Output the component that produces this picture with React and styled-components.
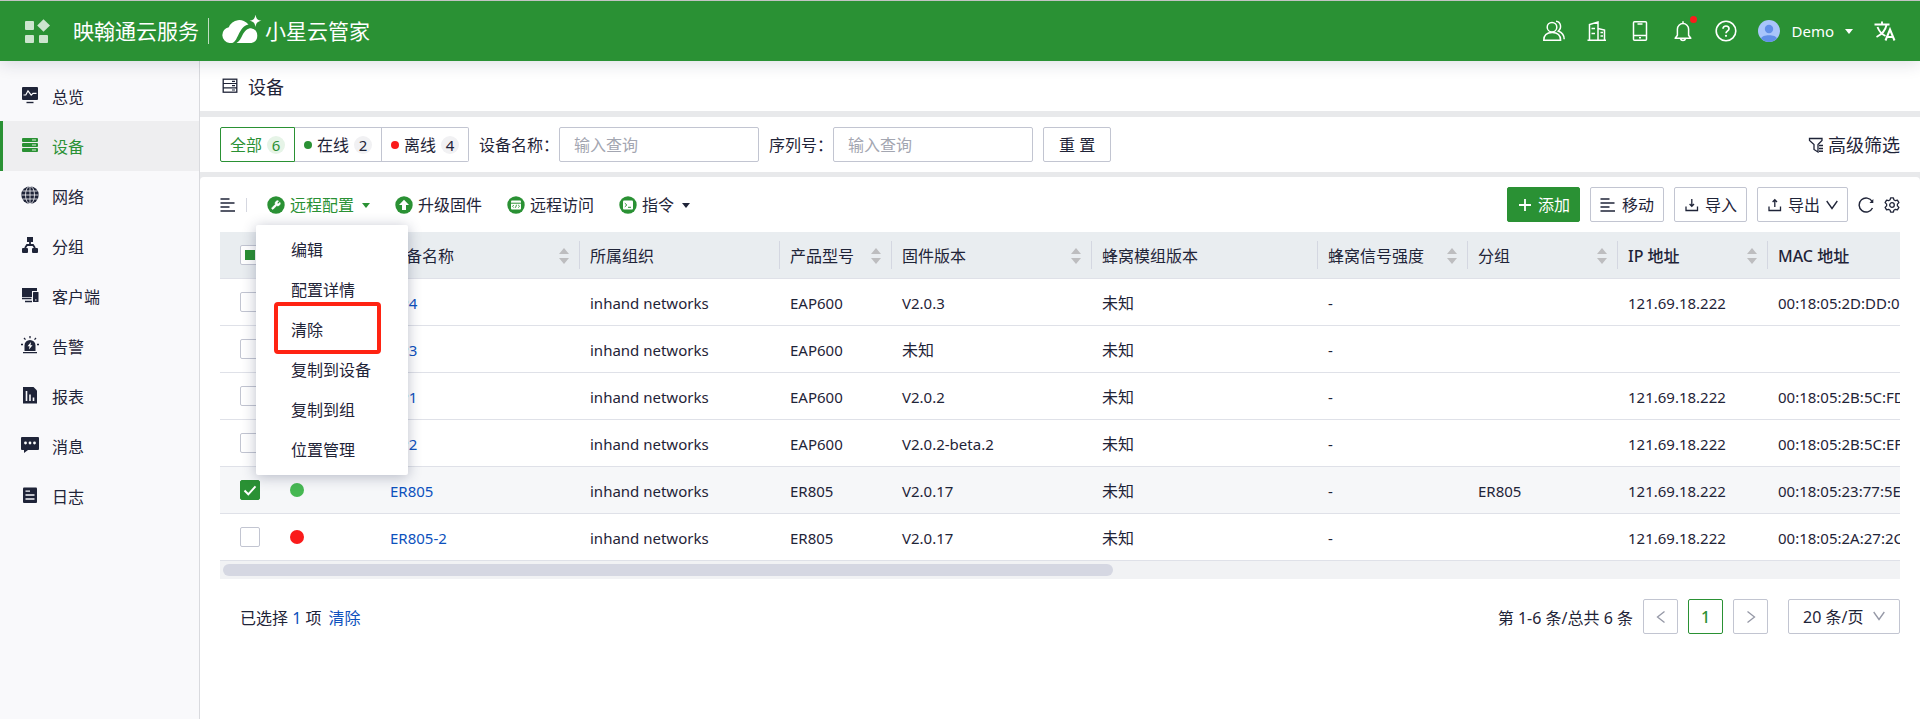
import React from "react";
import styled, { createGlobalStyle, css } from "styled-components";
import { Wrench } from "lucide-react";

const GlobalStyle = createGlobalStyle`
  * {
    box-sizing: border-box;
  }

  body {
    margin: 0;
    background: #ffffff;
    color: #1f2438;
    font-family: "Noto Sans", "Noto Sans CJK SC", sans-serif;
    font-size: 16px;
    line-height: 24px;
  }

  button, input, select {
    font: inherit;
    color: inherit;
  }

  a {
    text-decoration: none;
    color: inherit;
  }

  svg {
    display: block;
    flex: none;
  }
`;

const Page = styled.div`
  display: flex;
  flex-direction: column;
  min-height: 100vh;
`;

const Header = styled.header`
  position: relative;
  z-index: 1;
  display: flex;
  align-items: center;
  height: 61px;
  padding: 0 24px;
  border-top: 1px solid #c3c3c3;
  background: #2a9134;
  color: #ffffff;
  box-shadow: 0 2px 16px rgba(30, 36, 70, 0.16);
`;

const Brand = styled.div`
  display: flex;
  align-items: center;
  margin-left: 23px;
  font-size: 21px;
  font-weight: 400;
  white-space: nowrap;
`;

const BrandLine = styled.span`
  width: 1px;
  height: 26px;
  margin: 0 12px 0 9px;
  background: rgba(255, 255, 255, 0.7);
`;

const HeaderTools = styled.div`
  display: flex;
  align-items: center;
  gap: 21px;
  margin-left: auto;
`;

const IconButton = styled.button`
  display: flex;
  position: relative;
  align-items: center;
  padding: 0;
  border: 0;
  background: none;
  cursor: pointer;
`;

const HeaderButton = styled(IconButton)`
  justify-content: center;
  min-width: 22px;
  gap: 11px;
  font-size: 15px;
`;

const AlertDot = styled.span`
  position: absolute;
  top: -4px;
  right: -3px;
  width: 7px;
  height: 7px;
  border-radius: 50%;
  background: #fa1b1b;
`;

const Caret = styled.span`
  width: 0;
  height: 0;
  border: 4px solid transparent;
  border-top: 5px solid currentColor;
  border-bottom: 0;
`;

const Body = styled.div`
  display: flex;
  flex: 1;
`;

const Sidebar = styled.nav`
  flex: none;
  width: 200px;
  padding-top: 10px;
  border-right: 1px solid #d9dade;
  background: #f9f9fb;
`;

const NavItem = styled.a`
  display: flex;
  align-items: center;
  gap: 13px;
  height: 50px;
  padding: 2px 19px 0 18px;
  border-left: 3px solid transparent;

  svg {
    margin-bottom: 4px;
  }

  ${props =>
    props.$active &&
    css`
      border-left-color: #2a9134;
      background: #eeeef0;
      color: #2a9134;
    `}
`;

const Main = styled.main`
  flex: 1;
  min-width: 0;
  background: #e8e9eb;
`;

const Panel = styled.section`
  padding: 10px 20px;
  background: #ffffff;
`;

const TitlePanel = styled(Panel)`
  display: flex;
  align-items: center;
  gap: 10px;
  height: 50px;
  margin-bottom: 6px;
  padding-left: 22px;
`;

const Title = styled.h1`
  margin: 0;
  padding-top: 2px;
  font-size: 18px;
  font-weight: 400;
`;

const FilterPanel = styled(Panel)`
  display: flex;
  align-items: center;
  gap: 10px;
  margin-bottom: 5px;
`;

const TabGroup = styled.div`
  display: flex;
`;

const Tab = styled.button`
  display: flex;
  align-items: center;
  gap: 5px;
  height: 35px;
  padding: 0 9px;
  border: 1px solid ${props => (props.$active ? "#2a9134" : "#c2c5d1")};
  border-left-width: ${props => (props.$joined ? "0" : "1px")};
  border-radius: ${props => props.$radius || "0"};
  background: #ffffff;
  color: ${props => (props.$active ? "#2a9134" : "inherit")};
  cursor: pointer;
`;

const TabDot = styled.span`
  width: 8px;
  height: 8px;
  border-radius: 50%;
  background: ${props => props.$color};
`;

const Count = styled.span`
  width: 18px;
  height: 18px;
  border-radius: 9px;
  background: ${props => (props.$active ? "#e6f4e7" : "#f1f1f3")};
  font-size: 15px;
  line-height: 18px;
  text-align: center;
`;

const Field = styled.label`
  display: flex;
  align-items: center;
`;

const TextInput = styled.input`
  width: 200px;
  height: 35px;
  padding: 0 14px;
  border: 1px solid #c2c5d1;
  border-radius: 2px;
  background: #ffffff;

  &::placeholder {
    color: #a3a6b1;
  }
`;

const Button = styled.button`
  display: flex;
  align-items: center;
  gap: 6px;
  height: 35px;
  padding: 0 ${props => (props.$wide ? "15px" : "9px")};
  border: 1px solid ${props => (props.$primary ? "#2a9134" : "#c2c5d1")};
  border-radius: 2px;
  background: ${props => (props.$primary ? "#2a9134" : "#ffffff")};
  color: ${props => (props.$primary ? "#ffffff" : "inherit")};
  cursor: pointer;
`;

const AdvancedFilter = styled(IconButton)`
  gap: 4px;
  margin-left: auto;
  font-size: 18px;
`;

const ListPanel = styled(Panel)`
  min-height: calc(100% - 116px);
  border-radius: 4px 4px 0 0;
`;

const Toolbar = styled.div`
  display: flex;
  align-items: center;
  height: 35px;
  margin-bottom: 10px;
`;

const ToolbarLine = styled.span`
  width: 1px;
  height: 14px;
  margin: 0 20px 0 10px;
  background: #d5d7e0;
`;

const ActionGroup = styled.div`
  display: flex;
  gap: 25px;
`;

const Action = styled(IconButton)`
  gap: 5px;
  color: ${props => (props.$active ? "#2a9134" : "inherit")};

  ${Caret} {
    margin: 2px 0 0 3px;
  }
`;

const ToolbarEnd = styled.div`
  display: flex;
  align-items: center;
  gap: 10px;
  margin-left: auto;
`;

const Dropdown = styled.div`
  position: relative;
`;

const Menu = styled.ul`
  position: absolute;
  top: 32px;
  left: -11px;
  z-index: 2;
  width: 152px;
  margin: 0;
  padding: 5px 0;
  border-radius: 2px;
  background: #ffffff;
  box-shadow: 0 2px 14px rgba(34, 42, 80, 0.3);
  list-style: none;
`;

const MenuItem = styled.li`
  position: relative;
  height: 40px;
`;

const MenuButton = styled.button`
  width: 100%;
  height: 40px;
  padding: 0 35px;
  border: 0;
  background: none;
  text-align: left;
  white-space: nowrap;
  cursor: pointer;
`;

const Highlight = styled.span`
  position: absolute;
  top: -8px;
  left: 18px;
  width: 107px;
  height: 52px;
  border: 4px solid #ff2312;
  border-radius: 4px;
  pointer-events: none;
`;

const TableScroll = styled.div`
  overflow: hidden;
`;

const Table = styled.table`
  width: 3160px;
  table-layout: fixed;
  border-collapse: separate;
  border-spacing: 0;
`;

const Col = styled.col`
  width: ${props => props.$width}px;
`;

const Th = styled.th`
  height: 47px;
  padding: 0;
  border-bottom: 1px solid #dfe1e8;
  background: #e9edf0;
  font-weight: ${props => (props.$latin ? "500" : "400")};
  text-align: left;
`;

const ThInner = styled.div`
  display: flex;
  align-items: center;
  justify-content: space-between;
  height: 28px;
  padding: 2px 10px 0;
  border-right: ${props => (props.$line ? "1px solid #d4d7e1" : "0")};
`;

const Tr = styled.tr`
  background: ${props => (props.$selected ? "#f6f7f9" : "#ffffff")};
`;

const Td = styled.td`
  height: 47px;
  padding: 2px 10px 0;
  border-bottom: 1px solid #dfe1e8;
  font-size: ${props => (props.$latin ? "15px" : "16px")};
  white-space: nowrap;
`;

const CheckCell = styled(Td)`
  padding: 0 0 0 20px;
`;

const StatusCell = styled(Td)`
  padding: 0 10px;
`;

const StatusDot = styled.div`
  width: 14px;
  height: 14px;
  border-radius: 50%;
  background: ${props => props.$color};
`;

const CheckWrap = styled.div`
  position: relative;
  width: 20px;
  height: 20px;

  svg {
    position: absolute;
    top: 0;
    left: 0;
    pointer-events: none;
  }
`;

const HeadCheck = styled(CheckWrap)`
  margin-left: 20px;
`;

const Checkbox = styled.input`
  display: block;
  width: 20px;
  height: 20px;
  margin: 0;
  border: 1px solid #c2c5d1;
  border-radius: 2px;
  background: #ffffff;
  appearance: none;

  &:checked {
    border-color: #2a9134;
    background: #2a9134;
  }
`;

const DeviceLink = styled.a`
  color: #0d51bd;
`;

const ScrollTrack = styled.div`
  padding: 3px;
  background: #f1f2f4;
`;

const ScrollThumb = styled.div`
  width: calc(100% * 168 / 316);
  height: 12px;
  border-radius: 6px;
  background: #d5d7e2;
`;

const Footer = styled.footer`
  display: flex;
  align-items: center;
  justify-content: space-between;
  padding: 20px 0 20px 20px;
`;

const Selection = styled.div`
  padding-top: 3px;
`;

const SelectedCount = styled.span`
  color: #0d51bd;
`;

const ClearButton = styled(IconButton)`
  display: inline-block;
  margin-left: 7px;
  color: #0d51bd;
`;

const Pagination = styled.div`
  display: flex;
  align-items: center;
  gap: 10px;
`;

const Total = styled.span`
  padding-top: 3px;
`;

const PageButton = styled.button`
  display: flex;
  align-items: center;
  justify-content: center;
  width: 35px;
  height: 35px;
  padding: 0;
  border: 1px solid ${props => (props.$active ? "#2a9134" : "#c2c5d1")};
  border-radius: 2px;
  background: #ffffff;
  color: ${props => (props.$active ? "#2a9134" : "#9598a6")};
  font-weight: ${props => (props.$active ? "500" : "400")};
`;

const SelectWrap = styled.div`
  position: relative;
  margin-left: 10px;

  svg {
    position: absolute;
    top: 12px;
    right: 15px;
    color: #9598a6;
    pointer-events: none;
  }
`;

const PageSize = styled.select`
  width: 112px;
  height: 35px;
  padding: 0 14px;
  border: 1px solid #c2c5d1;
  border-radius: 2px;
  background: #ffffff;
  appearance: none;
`;

const Icon = ({ size = 18, w, h, box = "0 0 18 18", children }) => (
  <svg
    width={w || size}
    height={h || size}
    viewBox={box}
    fill="none"
    stroke="currentColor"
    aria-hidden="true"
  >
    {children}
  </svg>
);

const AppsIcon = () => (
  <svg width="26" height="24" viewBox="0 0 26 24" fill="#ffffff" fillOpacity="0.76">
    <rect x="1" y="2" width="9" height="9" rx="1" />
    <rect x="1" y="16" width="9" height="8" rx="1" />
    <rect x="15" y="16" width="9" height="8" rx="1" />
    <path d="M19.500 .3 26 6.500 19.500 12.700 13.200 6.500z" />
  </svg>
);

const CloudIcon = () => (
  <svg width="44" height="32" viewBox="0 0 44 32" fill="#ffffff">
    <path d="M11 28H8.500A8 8 0 0 1 7.800 12.200 11.500 11.500 0 0 1 27.500 9.500C22.500 10.500 20 14.500 17.300 20 15.300 24 14 27.500 11 28z" />
    <path d="M15.500 28C18.500 26.500 19.800 23.500 21.500 20 23.700 16 26.500 13.300 30 13.300A7.500 7.500 0 0 1 30.500 28z" />
    <path d="M34.500 -.5C35.300 4 36.500 5 40.500 5.800 36.500 6.600 35.300 7.800 34.500 12 33.700 7.800 32.500 6.600 28.500 5.800 32.500 5 33.700 4 34.500 -.5z" />
  </svg>
);

const UsersIcon = () => (
  <Icon w={22} h={22} box="0 0 22 22">
    <g strokeWidth="1.500">
      <circle cx="9" cy="7.200" r="4.800" />
      <path d="M.8 20.200c0-4.800 3-7.800 8.400-7.800s8.400 3 8.400 7.800zM13 1.200c5 .4 6 7 2.300 9.800 3.700 1.500 5.900 3.800 5.900 8.200" />
    </g>
  </Icon>
);

const BuildingIcon = () => (
  <Icon w={20} h={22} box="0 0 20 22">
    <path
      strokeWidth="1.500"
      d="M.5 20.200h18.500M2.500 20V4.500l8.500-2.500V20M11 8.500l6.500 1.500v10M4.500 8.500H8M4.500 13.500H8M13.500 12.500h2.500M13.500 16h2.500"
    />
  </Icon>
);

const TabletIcon = () => (
  <Icon w={16} h={22} box="0 0 16 22">
    <rect x="1.500" y="1.700" width="13" height="18.500" rx="1" strokeWidth="1.500" />
    <path d="M5.500 4h5M1.500 15.500h13" strokeWidth="1.400" />
    <path d="M7 17.800h2" strokeWidth="1.400" />
  </Icon>
);

const BellIcon = () => (
  <Icon w={18} h={22} box="0 0 18 22">
    <path
      strokeWidth="1.500"
      strokeLinejoin="round"
      d="M1.200 18.300h15.600l-2.200-3V9.200A5.600 5.600 0 0 0 3.400 9.200v6.100zM9 3.500V1.200M6.500 18.800c.6 2.300 4.400 2.300 5 0"
    />
  </Icon>
);

const HelpIcon = () => (
  <Icon w={22} h={22} box="0 0 22 22">
    <circle cx="11" cy="11" r="9.800" strokeWidth="1.600" />
    <path d="M8 8.800c0-3.800 6-3.700 6 0 0 2.100-3 2.100-3 4.500" strokeWidth="1.700" />
    <circle cx="11" cy="15.800" r="1.100" fill="currentColor" stroke="none" />
  </Icon>
);

const Avatar = () => (
  <svg width="22" height="22" viewBox="0 0 22 22">
    <circle cx="11" cy="11" r="11" fill="#a9c5fb" />
    <circle cx="11" cy="9" r="4.200" fill="#618fe8" />
    <path d="M3 18.500C4 14 18 14 19 18.500 15 23 7 23 3 18.500z" fill="#618fe8" />
  </svg>
);

const TranslateIcon = () => (
  <Icon w={22} h={20} box="0 0 22 20">
    <path d="M.5 3.500h15M8 .5v3M3.500 6c1.500 4 4.500 7.500 8 9M12.500 4c-1 5-5 9.500-10 12" strokeWidth="1.900" />
    <path d="M11.500 19.500 16 8.500l4.500 11M13 16h6" strokeWidth="2" />
  </Icon>
);

const navIcons = {
  overview: (
    <>
      <rect x="1" y="1" width="16" height="13" rx="1" fill="currentColor" stroke="none" />
      <path d="M5.500 16.500h7" strokeWidth="1.400" />
      <path d="M2.500 9h2.300L7 4.800l3.200 4.400 1.800-1.800h3.500" stroke="#fff" strokeWidth="1.200" />
    </>
  ),
  device: (
    <>
      <g fill="currentColor" stroke="none">
        <rect x="1" y="2" width="16" height="4" rx="1" />
        <rect x="1" y="7" width="16" height="4" rx="1" />
        <rect x="1" y="12" width="16" height="4" rx="1" />
      </g>
      <path d="M11 4h4M11 9h4M11 14h4" stroke="#dff0e0" strokeWidth="1.200" />
    </>
  ),
  network: (
    <>
      <circle cx="9" cy="9" r="8.700" fill="currentColor" stroke="none" />
      <g stroke="#f9f9fb" strokeWidth=".8">
        <path d="M9 0v18M.5 9h17M1.500 5h15M1.500 13h15" />
        <ellipse cx="9" cy="9" rx="4.500" ry="8.700" />
      </g>
    </>
  ),
  group: (
    <>
      <g fill="currentColor" stroke="none">
        <rect x="6" y="1" width="6" height="5" />
        <rect x="1" y="12" width="6" height="5" rx="1" />
        <rect x="11" y="12" width="6" height="5" rx="1" />
      </g>
      <path d="M9 6v3M4 12l2-3h6l2 3" strokeWidth="1.800" />
    </>
  ),
  client: (
    <>
      <g fill="currentColor" stroke="none">
        <path d="M1 2h15v3h-5v6H1z" />
        <rect x="12" y="6" width="5.500" height="10" rx=".5" />
      </g>
      <path d="M1 12.500h9.500M4 15.500h7" strokeWidth="1.300" />
      <path d="M14 14h1.500" stroke="#fff" />
    </>
  ),
  alarm: (
    <>
      <path d="M3.500 15V9.500a5.500 5.500 0 0 1 11 0V15z" fill="currentColor" stroke="none" />
      <path d="M2 16.700h14M9 0v2.200M3 2l1.500 1.600M15 2l-1.500 1.600M0 8.500h2M16 8.500h2" strokeWidth="1.300" />
      <path d="m10 6-3.500 4.200h2L8 13.500l3.500-4.300h-2z" fill="#fff" stroke="none" />
    </>
  ),
  report: (
    <>
      <path d="M2 1h10.500L16 4.500V17.500H2z" fill="currentColor" stroke="none" />
      <path d="M5.500 5v10M9 8.500V15M12.500 11.500V15" stroke="#f9f9fb" strokeWidth="1.600" />
    </>
  ),
  message: (
    <>
      <path d="M1 1h16q1 0 1 1v11q0 1-1 1H7l-4 3v-3H1q-1 0-1-1V2q0-1 1-1z" fill="currentColor" stroke="none" />
      <g fill="#fff" stroke="none">
        <circle cx="4.500" cy="7" r="1.400" />
        <circle cx="9" cy="7" r="1.400" />
        <circle cx="13.500" cy="7" r="1.400" />
      </g>
    </>
  ),
  log: (
    <>
      <rect x="2" y="1.500" width="14" height="15.500" rx="1" fill="currentColor" stroke="none" />
      <path d="M4.500 5.200H9M4.500 9h9M4.500 13h9" stroke="#f9f9fb" strokeWidth="1.300" />
    </>
  )
};

const LinesIcon = () => (
  <Icon w={16} h={16} box="0 0 16 16">
    <path d="M.5 2h9M.5 6h14M.5 10h9M.5 14h14.500" strokeWidth="1.500" />
  </Icon>
);

const ServerIcon = () => (
  <Icon w={16} h={16} box="0 0 16 16">
    <rect x="1.200" y="1.200" width="13.600" height="13" strokeWidth="1.300" />
    <path d="M1 5.500h14M1 9.800h14M10 3.400h3M10 7.700h3M10 12h3" strokeWidth="1.200" />
  </Icon>
);

const FunnelIcon = () => (
  <Icon w={16} h={16} box="0 0 16 16">
    <path d="M1.500 1.500h12.500v2l-4 4v7.500l-4-2.500v-5L1.500 3.500z" strokeWidth="1.300" />
    <path d="M11 8.500h4M11 11.500h4M11 14.300h4" strokeWidth="1.400" />
  </Icon>
);

const PlusIcon = () => (
  <Icon w={15} h={14} box="0 0 15 14">
    <path d="M8 1v12M2 7h12" strokeWidth="1.800" />
  </Icon>
);

const ImportIcon = () => (
  <Icon w={15} h={14} box="0 0 15 14">
    <path d="M2 8.500v4h11.500v-4" strokeWidth="1.300" />
    <path d="M7.800 1v7M5.600 6l2.200 2.300L10 6" strokeWidth="1.300" />
  </Icon>
);

const ExportIcon = () => (
  <Icon w={15} h={14} box="0 0 15 14">
    <path d="M2 8.500v4h11.500v-4" strokeWidth="1.300" />
    <path d="M7.800 9V2M5.600 4l2.200-2.300L10 4" strokeWidth="1.300" />
  </Icon>
);

const ChevronDown = () => (
  <Icon w={12} h={10} box="0 0 12 10">
    <path d="M.7 1 6 8.500 11.300 1" strokeWidth="1.300" />
  </Icon>
);

const RefreshIcon = () => (
  <Icon w={16} h={16} box="0 0 16 16">
    <path d="M14.200 4.500A7 7 0 1 0 14.500 11" strokeWidth="1.400" />
    <path d="M15.300 2v4h-3.800z" fill="currentColor" stroke="none" />
  </Icon>
);

const GearIcon = () => (
  <Icon w={16} h={16} box="0 0 16 16">
    <path
      strokeWidth="1.300"
      strokeLinejoin="round"
      d="M6.600.8h2.800l.5 2 1.500.9 2-.6 1.500 2.500-1.500 1.500v1.800l1.500 1.500-1.500 2.500-2-.6-1.500.9-.5 2H6.600l-.5-2-1.500-.9-2 .6-1.500-2.500 1.500-1.500V7.100L1.100 5.600l1.500-2.500 2 .6 1.500-.9z"
    />
    <circle cx="8" cy="8" r="2.300" strokeWidth="1.300" />
  </Icon>
);

const actionIcons = {
  config: <Wrench x={4} y={4} size={10} color="#fff" fill="#fff" />,
  upgrade: <path d="M9 3.800 14 9h-3v5H7V9H4z" fill="#fff" stroke="none" />,
  access: (
    <>
      <rect x="4" y="4.500" width="10" height="9" rx="1" fill="#fff" stroke="none" />
      <path d="M4 7.200h10" stroke="#2a9134" />
      <path d="m6.800 9-1.300 1.300 1.300 1.300M11.200 9l1.300 1.300-1.300 1.300M9.500 8.800l-1 3" stroke="#2a9134" strokeWidth=".9" />
    </>
  ),
  command: (
    <>
      <rect x="4" y="4.500" width="10" height="9" rx="1" fill="#fff" stroke="none" />
      <path d="m5.800 7.200 2 1.800-2 1.800M9 11.300h3" stroke="#2a9134" />
    </>
  )
};

const ActionIcon = ({ name }) => (
  <Icon>
    <circle cx="9" cy="9" r="8.700" fill="#2a9134" stroke="none" />
    {actionIcons[name]}
  </Icon>
);

const Sorter = () => (
  <svg width="10" height="18" viewBox="0 0 10 18" fill="#bdbdbf">
    <path d="M5 1 10 7H0zM5 17 0 11h10z" />
  </svg>
);

const navItems = [
  { icon: "overview", label: "总览" },
  { icon: "device", label: "设备", active: true },
  { icon: "network", label: "网络" },
  { icon: "group", label: "分组" },
  { icon: "client", label: "客户端" },
  { icon: "alarm", label: "告警" },
  { icon: "report", label: "报表" },
  { icon: "message", label: "消息" },
  { icon: "log", label: "日志" }
];

const menuItems = ["编辑", "配置详情", "清除", "复制到设备", "复制到组", "位置管理"];

const columns = [
  { title: "设备名称", width: 200, sort: true },
  { title: "所属组织", width: 200 },
  { title: "产品型号", width: 112, sort: true },
  { title: "固件版本", width: 200, sort: true },
  { title: "蜂窝模组版本", width: 226 },
  { title: "蜂窝信号强度", width: 150, sort: true },
  { title: "分组", width: 150, sort: true },
  { title: "IP 地址", width: 150, sort: true, latin: true },
  { title: "MAC 地址", width: 1612, latin: true, last: true }
];

const devices = [
  { name: "AP4", model: "EAP600", version: "V2.0.3", ip: "121.69.18.222", mac: "00:18:05:2D:DD:0", online: false },
  { name: "AP3", model: "EAP600", version: "未知", online: false },
  { name: "AP1", model: "EAP600", version: "V2.0.2", ip: "121.69.18.222", mac: "00:18:05:2B:5C:FD", online: false },
  { name: "AP2", model: "EAP600", version: "V2.0.2-beta.2", ip: "121.69.18.222", mac: "00:18:05:2B:5C:EF", online: true },
  {
    name: "ER805",
    model: "ER805",
    version: "V2.0.17",
    group: "ER805",
    ip: "121.69.18.222",
    mac: "00:18:05:23:77:5E",
    online: true,
    selected: true
  },
  { name: "ER805-2", model: "ER805", version: "V2.0.17", ip: "121.69.18.222", mac: "00:18:05:2A:27:2C", online: false }
];

const DeviceTable = () => (
  <Table>
    <colgroup>
      <Col $width={60} />
      <Col $width={100} />
      {columns.map(column => (
        <Col key={column.title} $width={column.width} />
      ))}
    </colgroup>
    <thead>
      <tr>
        <Th>
          <HeadCheck>
            <Checkbox type="checkbox" aria-label="全部" />
            <Icon size={20} box="0 0 20 20">
              <rect x="5" y="5" width="10" height="10" fill="#2a9134" stroke="none" />
            </Icon>
          </HeadCheck>
        </Th>
        <Th />
        {columns.map(column => (
          <Th key={column.title} $latin={column.latin}>
            <ThInner $line={!column.last}>
              {column.title}
              {column.sort && <Sorter />}
            </ThInner>
          </Th>
        ))}
      </tr>
    </thead>
    <tbody>
      {devices.map(device => (
        <Tr key={device.name} $selected={device.selected}>
          <CheckCell>
            <CheckWrap>
              <Checkbox type="checkbox" aria-label={device.name} defaultChecked={device.selected} />
              {device.selected && (
                <Icon size={20} box="0 0 20 20">
                  <path d="m4.500 10.500 3.800 3.800 7.200-8" stroke="#fff" strokeWidth="2" />
                </Icon>
              )}
            </CheckWrap>
          </CheckCell>
          <StatusCell>
            <StatusDot $color={device.online ? "#46b852" : "#fa1b1b"} />
          </StatusCell>
          <Td $latin>
            <DeviceLink href="#">{device.name}</DeviceLink>
          </Td>
          <Td $latin>inhand networks</Td>
          <Td $latin>{device.model}</Td>
          <Td $latin={device.version !== "未知"}>{device.version}</Td>
          <Td>未知</Td>
          <Td $latin>-</Td>
          <Td $latin>{device.group}</Td>
          <Td $latin>{device.ip}</Td>
          <Td $latin>{device.mac}</Td>
        </Tr>
      ))}
    </tbody>
  </Table>
);

const App = () => (
  <Page>
    <GlobalStyle />
    <Header>
      <IconButton aria-label="应用">
        <AppsIcon />
      </IconButton>
      <Brand>
        映翰通云服务
        <BrandLine />
        <CloudIcon />
        小星云管家
      </Brand>
      <HeaderTools>
        <HeaderButton aria-label="用户">
          <UsersIcon />
        </HeaderButton>
        <HeaderButton aria-label="组织">
          <BuildingIcon />
        </HeaderButton>
        <HeaderButton aria-label="设备">
          <TabletIcon />
        </HeaderButton>
        <HeaderButton aria-label="消息">
          <BellIcon />
          <AlertDot />
        </HeaderButton>
        <HeaderButton aria-label="帮助">
          <HelpIcon />
        </HeaderButton>
        <HeaderButton>
          <Avatar />
          Demo
          <Caret />
        </HeaderButton>
        <HeaderButton aria-label="语言">
          <TranslateIcon />
        </HeaderButton>
      </HeaderTools>
    </Header>

    <Body>
      <Sidebar>
        {navItems.map(item => (
          <NavItem key={item.icon} href="#" $active={item.active}>
            <Icon>{navIcons[item.icon]}</Icon>
            {item.label}
          </NavItem>
        ))}
      </Sidebar>

      <Main>
        <TitlePanel>
          <ServerIcon />
          <Title>设备</Title>
        </TitlePanel>

        <FilterPanel>
          <TabGroup>
            <Tab $active $radius="2px 0 0 2px">
              全部
              <Count $active>6</Count>
            </Tab>
            <Tab $joined>
              <TabDot $color="#2a9134" />
              在线
              <Count>2</Count>
            </Tab>
            <Tab $joined $radius="0 2px 2px 0">
              <TabDot $color="#fa1b1b" />
              离线
              <Count>4</Count>
            </Tab>
          </TabGroup>
          <Field>
            设备名称：
            <TextInput placeholder="输入查询" />
          </Field>
          <Field>
            序列号：
            <TextInput placeholder="输入查询" />
          </Field>
          <Button $wide>重 置</Button>
          <AdvancedFilter>
            <FunnelIcon />
            高级筛选
          </AdvancedFilter>
        </FilterPanel>

        <ListPanel>
          <Toolbar>
            <IconButton aria-label="分组列表">
              <LinesIcon />
            </IconButton>
            <ToolbarLine />
            <ActionGroup>
              <Dropdown>
                <Action $active aria-expanded="true">
                  <ActionIcon name="config" />
                  远程配置
                  <Caret />
                </Action>
                <Menu>
                  {menuItems.map(item => (
                    <MenuItem key={item}>
                      <MenuButton>{item}</MenuButton>
                      {item === "清除" && <Highlight />}
                    </MenuItem>
                  ))}
                </Menu>
              </Dropdown>
              <Action>
                <ActionIcon name="upgrade" />
                升级固件
              </Action>
              <Action>
                <ActionIcon name="access" />
                远程访问
              </Action>
              <Action>
                <ActionIcon name="command" />
                指令
                <Caret />
              </Action>
            </ActionGroup>
            <ToolbarEnd>
              <Button $primary>
                <PlusIcon />
                添加
              </Button>
              <Button>
                <LinesIcon />
                移动
              </Button>
              <Button>
                <ImportIcon />
                导入
              </Button>
              <Button>
                <ExportIcon />
                导出
                <ChevronDown />
              </Button>
              <IconButton aria-label="刷新">
                <RefreshIcon />
              </IconButton>
              <IconButton aria-label="列设置">
                <GearIcon />
              </IconButton>
            </ToolbarEnd>
          </Toolbar>

          <TableScroll>
            <DeviceTable />
          </TableScroll>
          <ScrollTrack>
            <ScrollThumb />
          </ScrollTrack>

          <Footer>
            <Selection>
              已选择 <SelectedCount>1</SelectedCount> 项<ClearButton>清除</ClearButton>
            </Selection>
            <Pagination>
              <Total>第 1-6 条/总共 6 条</Total>
              <PageButton aria-label="上一页">
                <Icon w={10} h={14} box="0 0 10 14">
                  <path d="M8.500 1.500 1.500 7l7 5.500" strokeWidth="1.300" />
                </Icon>
              </PageButton>
              <PageButton $active>1</PageButton>
              <PageButton aria-label="下一页">
                <Icon w={10} h={14} box="0 0 10 14">
                  <path d="m1.500 1.500 7 5.500-7 5.500" strokeWidth="1.300" />
                </Icon>
              </PageButton>
              <SelectWrap>
                <PageSize aria-label="每页条数">
                  <option>20 条/页</option>
                </PageSize>
                <ChevronDown />
              </SelectWrap>
            </Pagination>
          </Footer>
        </ListPanel>
      </Main>
    </Body>
  </Page>
);

export default App;
